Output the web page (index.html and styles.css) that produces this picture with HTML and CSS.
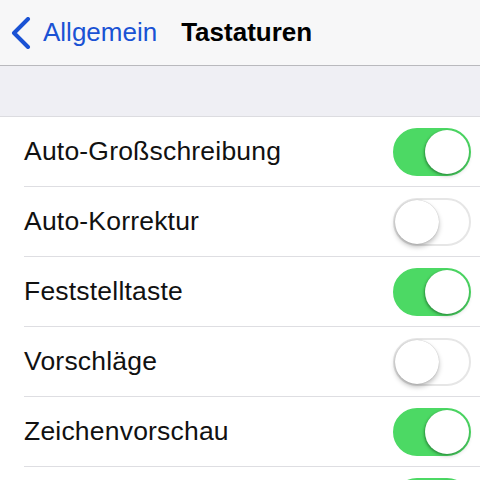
FILE: index.html
```html
<!DOCTYPE html>
<html lang="de">
<head>
    <meta charset="UTF-8">
    <meta name="viewport" content="width=device-width, initial-scale=1.0">
    <title>Tastaturen</title>
    <link rel="stylesheet" href="styles.css">
</head>
<body>
    <header class="navbar">
        <a class="back" href="#">
            <svg class="chevron" width="20" height="32" viewBox="0 0 20 32">
                <path d="M17 2 L3 16 L17 30" fill="none" stroke="#1a52d4" stroke-width="4" stroke-linecap="round" stroke-linejoin="round"/>
            </svg>
            <span>Allgemein</span>
        </a>
        <h1 class="title">Tastaturen</h1>
    </header>

    <div class="spacer"></div>

    <ul class="list">
        <li class="row"><span>Auto-Großschreibung</span><span class="switch on"></span></li>
        <li class="row"><span>Auto-Korrektur</span><span class="switch"></span></li>
        <li class="row"><span>Feststelltaste</span><span class="switch on"></span></li>
        <li class="row"><span>Vorschläge</span><span class="switch"></span></li>
        <li class="row"><span>Zeichenvorschau</span><span class="switch on"></span></li>
        <li class="row last"><span class="switch on"></span></li>
    </ul>
</body>
</html>
```

FILE: styles.css
```css
body {
    margin: 0;
    font-family: 'Liberation Sans', Arial, sans-serif;
    background: #fff;
    color: #111;
    overflow: hidden;
}
.navbar {
    height: 65px;
    background: #f7f7f8;
    border-bottom: 1px solid #b9b9bd;
    display: flex;
    align-items: center;
}
.back {
    display: flex;
    align-items: center;
    color: #1a52d4;
    text-decoration: none;
    font-size: 26px;
    padding-left: 11px;
}
.chevron {
    margin-right: 12px;
}
.title {
    margin: 0 0 0 24px;
    font-size: 26px;
    font-weight: bold;
    color: #000;
}
.spacer {
    height: 50px;
    background: #efeff4;
    border-bottom: 1px solid #dcdce0;
}
.list {
    list-style: none;
    margin: 0;
    padding: 0 0 0 24px;
}
.row {
    height: 69px;
    border-bottom: 1px solid #dedee2;
    display: flex;
    align-items: center;
    justify-content: space-between;
    padding-right: 9px;
    font-size: 26.5px;
    letter-spacing: 0.2px;
}
.row.last {
    justify-content: flex-end;
}
.switch {
    position: relative;
    width: 74px;
    height: 44px;
    border: 2px solid #e6e6e6;
    border-radius: 24px;
    background: #fff;
}
.switch::after {
    content: "";
    position: absolute;
    top: 0;
    left: 0;
    width: 44px;
    height: 44px;
    border-radius: 50%;
    background: #fff;
    box-shadow: 0 3px 5px rgba(0,0,0,0.25), 0 0 1px rgba(0,0,0,0.3);
}
.switch.on {
    background: #4cd964;
    border-color: #4cd964;
}
.switch.on::after {
    left: 30px;
    box-shadow: 0 2px 4px rgba(0,0,0,0.2), -1px 1px 2px rgba(0,80,20,0.35);
}
```
